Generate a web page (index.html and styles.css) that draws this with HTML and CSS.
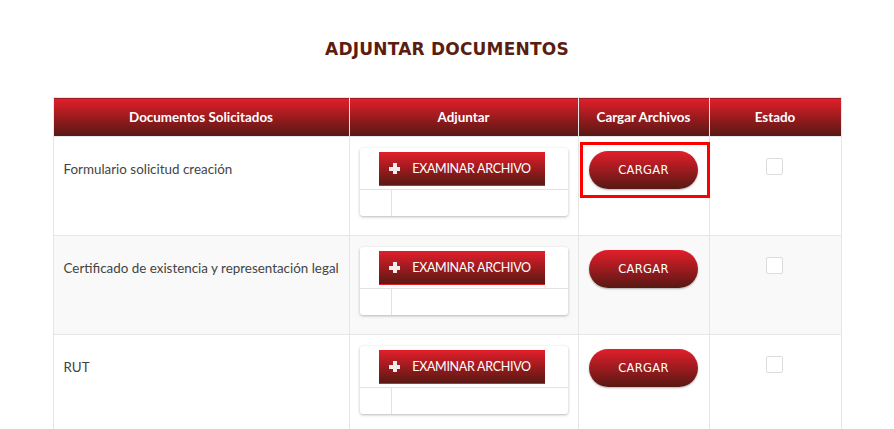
FILE: index.html
```html
<!DOCTYPE html>
<html lang="es">
<head>
<meta charset="utf-8">
<title>Adjuntar documentos</title>
<link rel="stylesheet" href="styles.css">
</head>
<body>
<h1 class="title">ADJUNTAR DOCUMENTOS</h1>
<table class="docs">
  <colgroup>
    <col class="c1"><col class="c2"><col class="c3"><col class="c4">
  </colgroup>
  <thead>
    <tr>
      <th>Documentos Solicitados</th>
      <th>Adjuntar</th>
      <th>Cargar Archivos</th>
      <th>Estado</th>
    </tr>
  </thead>
  <tbody>
    <tr>
      <td class="name">Formulario solicitud creación</td>
      <td class="attach">
        <div class="file">
          <div class="file-top"><span class="browse"><span class="plus"></span>EXAMINAR ARCHIVO</span></div>
          <div class="file-bottom"><span class="file-cell"></span><span class="file-name"></span></div>
        </div>
      </td>
      <td class="load"><span class="highlight"></span><span class="cargar">CARGAR</span></td>
      <td class="state"><span class="check"></span></td>
    </tr>
    <tr class="alt">
      <td class="name">Certificado de existencia y representación legal</td>
      <td class="attach">
        <div class="file">
          <div class="file-top"><span class="browse"><span class="plus"></span>EXAMINAR ARCHIVO</span></div>
          <div class="file-bottom"><span class="file-cell"></span><span class="file-name"></span></div>
        </div>
      </td>
      <td class="load"><span class="cargar">CARGAR</span></td>
      <td class="state"><span class="check"></span></td>
    </tr>
    <tr>
      <td class="name">RUT</td>
      <td class="attach">
        <div class="file">
          <div class="file-top"><span class="browse"><span class="plus"></span>EXAMINAR ARCHIVO</span></div>
          <div class="file-bottom"><span class="file-cell"></span><span class="file-name"></span></div>
        </div>
      </td>
      <td class="load"><span class="cargar">CARGAR</span></td>
      <td class="state"><span class="check"></span></td>
    </tr>
  </tbody>
</table>
</body>
</html>
```
FILE: styles.css
```css
html, body {
  margin: 0;
  padding: 0;
  background: #fff;
  height: 429px;
  overflow: hidden;
}
body {
  font-family: Lato, "Liberation Sans", sans-serif;
  color: #444;
}
.title {
  margin: 0;
  padding-top: 39px;
  height: 97px;
  text-align: center;
  font-family: "DejaVu Sans", sans-serif;
  font-weight: bold;
  font-size: 17px;
  letter-spacing: 0.2px;
  color: #5b1d10;
  line-height: 20px;
  box-sizing: border-box;
}
.docs {
  margin: 0 auto;
  width: 788px;
  border-collapse: collapse;
  table-layout: fixed;
  border: 1px solid #e4e4e4;
}
.c1 { width: 296px; }
.c2 { width: 229px; }
.c3 { width: 131px; }
.c4 { width: 132px; }
.docs th {
  height: 39px;
  padding: 0;
  box-sizing: border-box;
  background: linear-gradient(#e31f2b, #8c1a1c 60%, #561914);
  color: #fff;
  font-size: 13.4px;
  font-weight: bold;
  text-align: center;
  border-left: 1px solid #e8e8e8;
  border-right: 1px solid #e8e8e8;
}
.docs td {
  height: 99px;
  box-sizing: border-box;
  vertical-align: top;
  padding: 0;
  border: 1px solid #e6e6e6;
  border-top: 1px solid #e4e6e8;
}
.docs tr.alt td { background: #f9f9f9; }
.docs td.name {
  padding: 23px 0 0 10px;
  font-size: 13.4px;
  line-height: 18px;
  color: #444;
  white-space: nowrap;
  overflow: hidden;
}
.docs td.attach { padding: 11px 10px 0 10px; }
.file {
  border-radius: 3px;
  background: #fff;
  box-shadow: 0 1px 3px rgba(0,0,0,0.28);
  display: flex;
  flex-direction: column;
}
.file-top {
  display: flex;
  justify-content: center;
  padding: 4px 0 3px 0;
  border-bottom: 1px solid #e2e2e2;
}
.browse {
  width: 166px;
  height: 34px;
  box-sizing: border-box;
  display: flex;
  align-items: center;
  justify-content: center;
  gap: 12px;
  background: linear-gradient(#e31f2b, #8f1a1c 60%, #5a1914);
  border-bottom: 1px solid #e0202b;
  color: #fff;
  font-size: 12.5px;
  letter-spacing: -0.3px;
  padding-right: 4px;
  margin-left: -3px;
}
.plus {
  width: 11px;
  height: 11px;
  position: relative;
  flex: none;
}
.plus::before, .plus::after {
  content: "";
  position: absolute;
  background: #f3eaea;
}
.plus::before { left: 3.5px; top: 0; width: 4px; height: 11px; }
.plus::after { left: 0; top: 3.5px; width: 11px; height: 4px; }
.file-bottom {
  display: flex;
  height: 26px;
}
.file-cell {
  width: 31px;
  border-right: 1px solid #e2e2e2;
}
.docs td.load {
  position: relative;
  padding-top: 14px;
  text-align: center;
}
.cargar {
  display: inline-flex;
  align-items: center;
  justify-content: center;
  width: 109px;
  height: 38px;
  border-radius: 19px;
  background: linear-gradient(#e31f2b, #8f1a1c 60%, #561914);
  color: #fff;
  font-family: "DejaVu Sans", sans-serif;
  font-size: 11.5px;
  letter-spacing: 0.3px;
  box-shadow: 0 1px 2px rgba(0,0,0,0.3);
}
.highlight {
  position: absolute;
  left: 1px;
  top: 5px;
  width: 130px;
  height: 56px;
  box-sizing: border-box;
  border: 3px solid #ff0000;
}
.docs td.state {
  padding-top: 21px;
  text-align: center;
}
.check {
  display: inline-block;
  width: 17px;
  height: 17px;
  box-sizing: border-box;
  border: 1px solid #dcdcdc;
  border-radius: 2px;
  background: #fff;
  margin-left: -1px;
}
```
